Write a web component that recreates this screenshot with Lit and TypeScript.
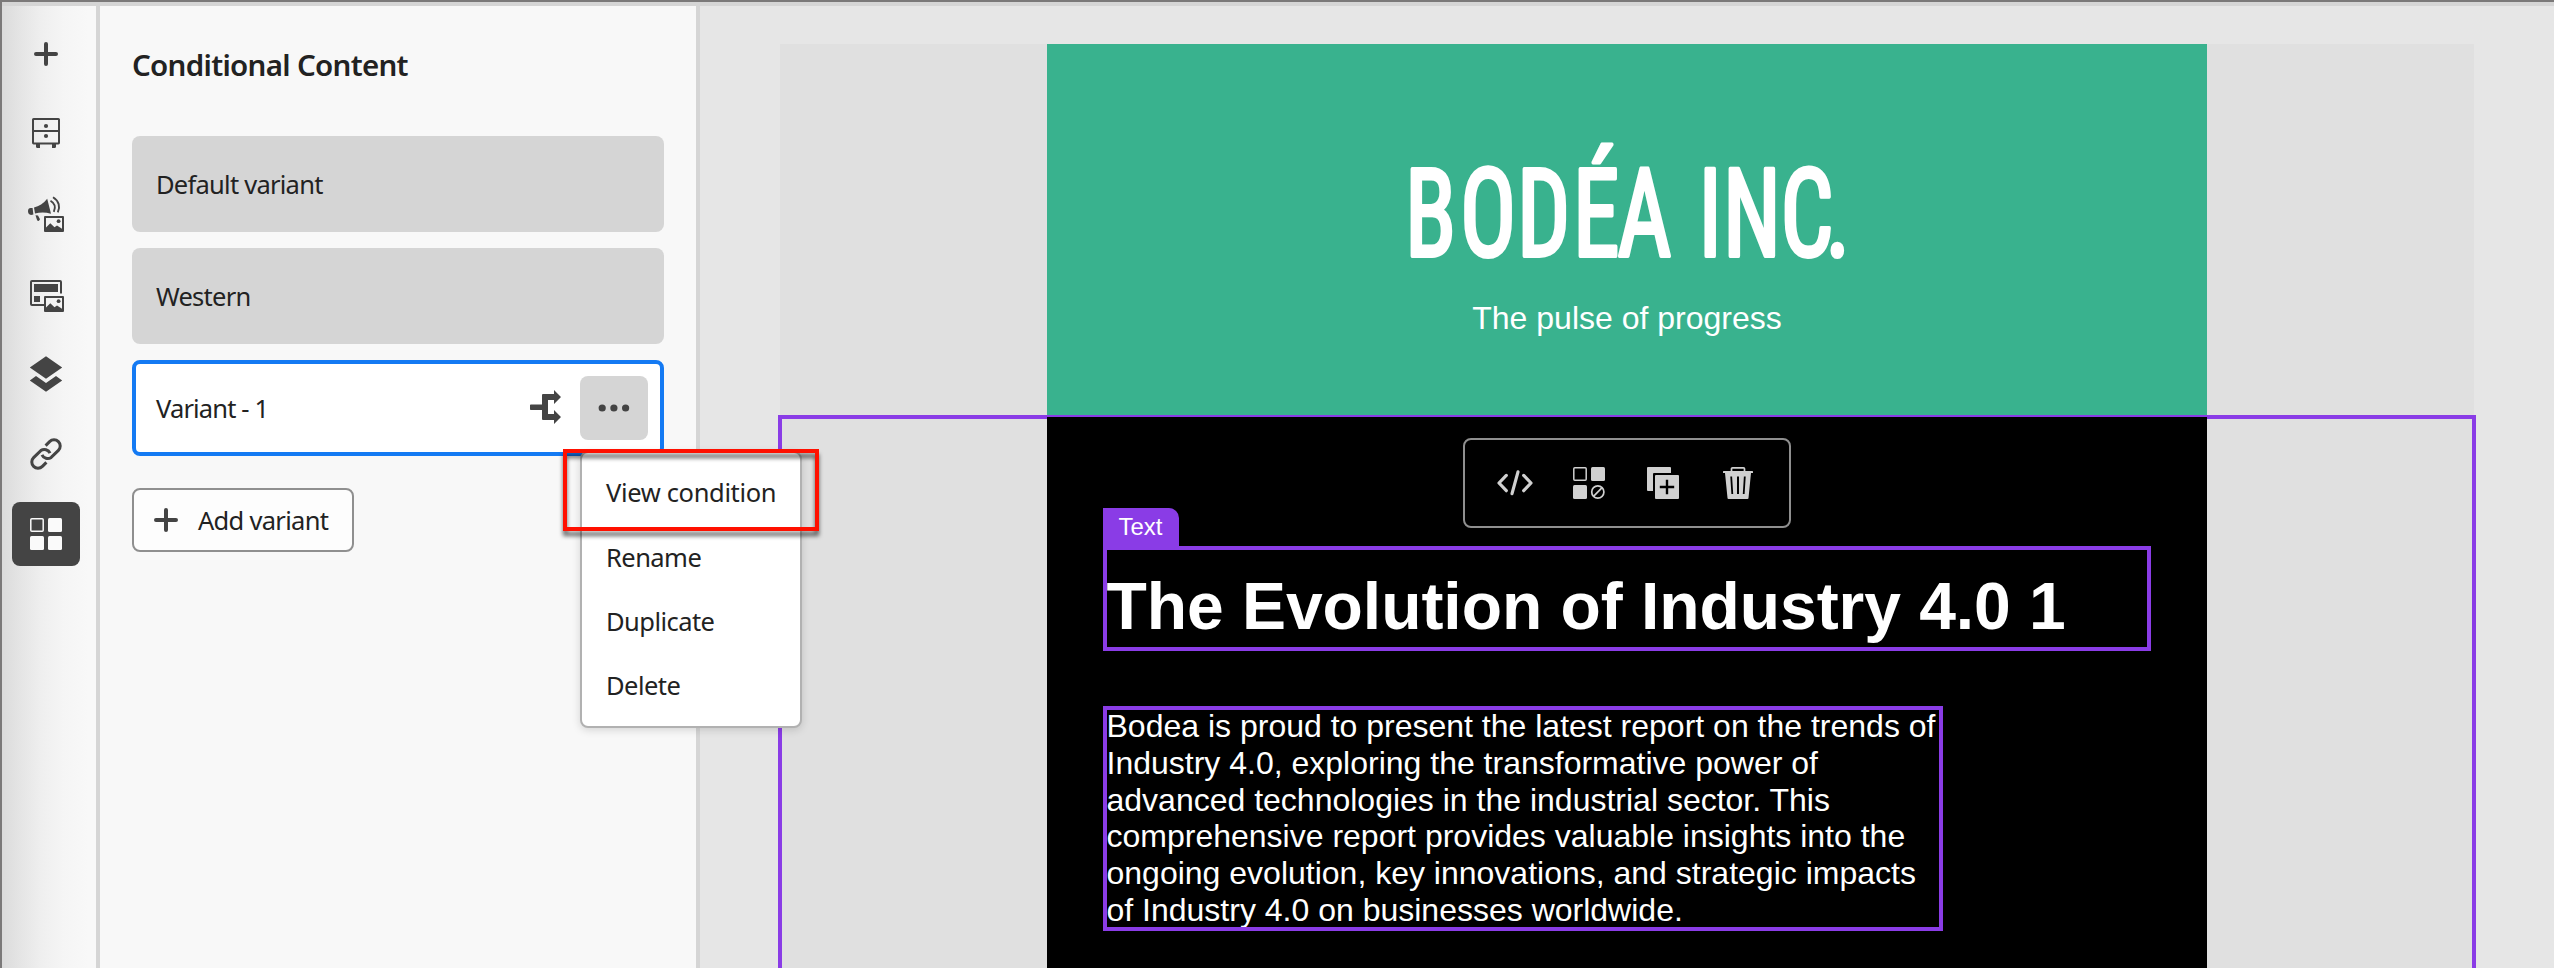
import { LitElement, html, svg, css, TemplateResult } from "lit";
import { customElement, property } from "lit/decorators.js";
import { classMap } from "lit/directives/class-map.js";

const picture = svg`
  <path fill-rule="evenodd" d="M17 20H35A1 1 0 0 1 36 21V35A1 1 0 0 1 35 36H17A1 1 0 0 1 16 35V21A1 1 0 0 1 17 20ZM18 22V31.5L22.3 27.2L26.5 31.3L29 29.6L34 32.8V22Z"/>
  <circle cx="30.6" cy="25.2" r="1.9"/>`;

const icons: Record<string, TemplateResult> = {
  plus: svg`<path d="M18 8V28M8 18H28" fill="none" stroke="currentColor" stroke-width="4" stroke-linecap="round"/>`,
  cabinet: svg`
    <rect x="5" y="3" width="26" height="24.4" rx=".6" fill="none" stroke="currentColor" stroke-width="2"/>
    <path d="M5 15H31" stroke="currentColor" stroke-width="2"/>
    <circle cx="18" cy="10" r="2.1"/><circle cx="18" cy="20" r="2.1"/>
    <path d="M8 28H12V32H8.8L8 31ZM24 28H28V31L27.2 32H24Z"/>`,
  campaign: svg`
    <path d="M6 11.6C11 10.4 15.5 7.500 19.200 2.800L23 17.800C17.500 16 12 16.200 7 17.500Z"/>
    <path d="M4.600 11.900L5.400 18.600L3 18.900C1.400 18.900 0 17.500 0 15.300C0 13.200 1.200 12.200 2.500 12.100Z"/>
    <path d="M7.500 19.300L10 19.400L12 23.300L10.800 25L9.200 24.600Z"/>
    <path d="M22.500 4.800C26.800 7.300 27.800 11.500 25.800 15.800M25 1.200C31 4.800 32.500 11 29.800 16.400" fill="none" stroke="currentColor" stroke-width="1.900"/>
    ${picture}`,
  form: svg`
    <path d="M16 29H4A1 1 0 0 1 3 28V6A1 1 0 0 1 4 5H32A1 1 0 0 1 33 6V17.500" fill="none" stroke="currentColor" stroke-width="2"/>
    <path d="M6 8H30V16H6ZM6 20H12V26H6Z"/>
    ${picture}`,
  layers: svg`<path d="M18 .3L34.200 11.500L18 22.700L1.800 11.500ZM1.800 24.500L8 20L18 27L28 20L34.200 24.500L18 35.700Z"/>`,
  link: svg`
    <g fill="none" stroke="currentColor" stroke-width="3">
      <path d="M17.600 9.600L21.600 5.600A6.200 6.200 0 0 1 30.400 14.400L23.200 21.400A6.200 6.200 0 0 1 14 18.800"/>
      <path d="M18.400 26.400L14.400 30.400A6.200 6.200 0 0 1 5.600 21.600L12.800 14.600A6.200 6.200 0 0 1 22 17.200"/>
    </g>`,
  blocks: svg`
    <rect x="2.800" y="2.800" width="12.400" height="12.400" rx="1" fill="none" stroke="currentColor" stroke-width="1.500"/>
    <rect x="20" y="2" width="14" height="14" rx="1.500"/>
    <rect x="2" y="20" width="14" height="14" rx="1.500"/>
    <rect x="20" y="20" width="14" height="14" rx="1.500"/>`,
  blocksOff: svg`
    <rect x="2.800" y="2.800" width="12.400" height="12.400" rx="1" fill="none" stroke="currentColor" stroke-width="1.500"/>
    <rect x="20" y="2" width="14" height="14" rx="1.500"/>
    <rect x="2" y="20" width="14" height="14" rx="1.500"/>
    <g fill="none" stroke="currentColor" stroke-width="1.700"><circle cx="26.800" cy="27" r="6.100"/><path d="M22.500 31.300L31.100 22.700"/></g>`,
  split: svg`<path d="M2.800 15.500H14V6A1 1 0 0 1 15 5H26V1L33 8L26 15V11H20V25H26V21L33 28L26 35V31H15A1 1 0 0 1 14 30V21H2.800A.8 .8 0 0 1 2 20.200V16.300A.8 .8 0 0 1 2.800 15.500Z"/>`,
  more: svg`<circle cx="6.200" cy="18" r="3.600"/><circle cx="17.900" cy="18" r="3.600"/><circle cx="29.600" cy="18" r="3.600"/>`,
  code: svg`
    <g fill="none" stroke="currentColor" stroke-width="3.200" stroke-linecap="round" stroke-linejoin="round">
      <path d="M9.300 10.400L2 18L9.300 25.700M26.700 10.400L34 18L26.700 25.700"/><path d="M21 6.800L15 28.600"/>
    </g>`,
  copy: svg`
    <path d="M3 2H25A1 1 0 0 1 26 3V8H9A1 1 0 0 0 8 9V26H3A1 1 0 0 1 2 25V3A1 1 0 0 1 3 2Z"/>
    <path fill-rule="evenodd" d="M11 10H33A1 1 0 0 1 34 11V33A1 1 0 0 1 33 34H11A1 1 0 0 1 10 33V11A1 1 0 0 1 11 10ZM20.800 14.800V20.800H14.800V23.200H20.800V29.200H23.200V23.200H29.200V20.800H23.200V14.800Z"/>`,
  trash: svg`
    <path d="M11.500 6V3.800A1 1 0 0 1 12.500 2.800H23.500A1 1 0 0 1 24.500 3.800V6" fill="none" stroke="currentColor" stroke-width="1.700"/>
    <path d="M3.500 6H32.500A.5 .5 0 0 1 33 6.500V8H3V6.500A.5 .5 0 0 1 3.500 6Z"/>
    <path fill-rule="evenodd" d="M5 8H31L28.500 33A1 1 0 0 1 27.500 34H8.500A1 1 0 0 1 7.500 33ZM10.300 11.500L11.400 29H13.200L12.100 11.500ZM17 11.500V29H19V11.500ZM23.900 11.500L22.800 29H24.600L25.700 11.500Z"/>`,
};

@customElement("ui-icon")
export class UiIcon extends LitElement {
  static styles = css`
    :host { display: block; width: 36px; height: 36px; }
    svg { display: block; }
  `;
  @property() name = "";
  render() {
    return html`<svg width="36" height="36" viewBox="0 0 36 36" fill="currentColor">${icons[this.name]}</svg>`;
  }
}

@customElement("nav-rail")
export class NavRail extends LitElement {
  static styles = css`
    :host {
      display: flex; flex-direction: column; align-items: center; gap: 16px;
      box-sizing: border-box; padding: 16px 6px 0 0; color: #444;
      border-right: 4px solid #d5d5d5;
      background: linear-gradient(90deg, #dbdbdb 0, #e5e5e5 20%, #efefef 42%, #f5f5f5 65%, #f8f8f8 92%);
    }
    .item { width: 68px; height: 64px; border-radius: 8px; display: grid; place-items: center; }
    .active { background: #444; color: #fafafa; }
  `;
  render() {
    const names = ["plus", "cabinet", "campaign", "form", "layers", "link", "blocks"];
    return names.map((n) => html`
      <div class=${classMap({ item: true, active: n === "blocks" })}><ui-icon name=${n}></ui-icon></div>`);
  }
}

@customElement("variant-panel")
export class VariantPanel extends LitElement {
  static styles = css`
    :host {
      display: flex; flex-direction: column; box-sizing: border-box; padding: 0 32px;
      background: #f8f8f8; border-right: 4px solid #d5d5d5; color: #222;
      font: 25.5px/36px "Noto Sans", "Open Sans", sans-serif; letter-spacing: -.75px;
    }
    h2 { margin: 39px 0 71px; font-size: 29.5px; line-height: 40px; height: 20px; font-weight: 600; letter-spacing: -.7px; }
    .list { display: flex; flex-direction: column; gap: 16px; }
    .card {
      display: flex; align-items: center; box-sizing: border-box; height: 96px;
      padding: 0 24px; border-radius: 8px; background: #d5d5d5;
    }
    .card.selected { background: #fff; border: 4px solid #147af3; padding: 0 12px 0 20px; letter-spacing: -.85px; }
    .name { flex: 1; }
    .split { color: #444; margin-right: 16px; padding-bottom: 2px; }
    .anchor { position: relative; }
    .more { width: 68px; height: 64px; border-radius: 8px; background: #d5d5d5; color: #444; display: grid; place-items: center; }
    .menu {
      position: absolute; left: 0; top: 75px; z-index: 2; width: 222px; height: 277px;
      box-sizing: border-box; padding: 7px 0 0; background: #fff; border: 2px solid #b1b1b1; border-radius: 8px;
      box-shadow: 0 2px 8px rgba(0, 0, 0, .15); letter-spacing: -.55px;
    }
    .option { height: 64.4px; display: flex; align-items: center; padding-left: 24px; }
    .option:first-child { letter-spacing: -.35px; }
    .marker {
      position: absolute; left: -17px; top: 73px; z-index: 3; box-sizing: border-box;
      width: 256px; height: 82px; border: 4px solid #ff1000; filter: drop-shadow(0 5px 2px rgba(0, 0, 0, .6));
    }
    .add {
      align-self: flex-start; margin-top: 32px; box-sizing: border-box; width: 222px; height: 64px;
      display: flex; align-items: center; gap: 14px; padding-left: 14px; letter-spacing: -.7px;
      border: 2px solid #8f8f8f; border-radius: 8px; background: #fdfdfd;
    }
    .add ui-icon { color: #444; }
  `;
  render() {
    return html`
      <h2>Conditional Content</h2>
      <div class="list">
        <div class="card">Default variant</div>
        <div class="card">Western</div>
        <div class="card selected">
          <span class="name">Variant - 1</span>
          <ui-icon class="split" name="split"></ui-icon>
          <div class="anchor">
            <div class="more"><ui-icon name="more"></ui-icon></div>
            <div class="menu">
              ${["View condition", "Rename", "Duplicate", "Delete"].map((t) => html`<div class="option">${t}</div>`)}
            </div>
            <div class="marker"></div>
          </div>
        </div>
      </div>
      <div class="add"><ui-icon name="plus"></ui-icon><span>Add variant</span></div>`;
  }
}

@customElement("email-canvas")
export class EmailCanvas extends LitElement {
  static styles = css`
    :host {
      display: flex; flex-direction: column; box-sizing: border-box; padding: 38px 80px 0; margin-bottom: -12px;
      background: #e6e6e6; color: #fff; font-family: "Liberation Sans", Arial, sans-serif;
    }
    .row { display: flex; justify-content: center; background: #e0e0e0; }
    .selected { flex: 1; outline: 4px solid #8a3ce6; outline-offset: -2px; }
    .col { width: 1160px; box-sizing: border-box; }
    header { height: 373px; background: #39b28e; display: flex; flex-direction: column; align-items: center; padding-top: 60px; box-sizing: border-box; }
    .logo { display: block; margin-left: 1px; overflow: visible; }
    .logo text {
      font: 400 123px Roboto, sans-serif; font-stretch: 75%; fill: #fff;
      stroke: #fff; stroke-width: 4px; stroke-linejoin: round;
    }
    .tagline { margin: 6px 0 0; font-size: 32px; line-height: 37px; }
    .body { position: relative; background: #000; padding: 131px 58px 0; }
    .block { outline: 4px solid #8a3ce6; outline-offset: -2px; }
    .heading { position: relative; height: 101px; width: 1044px; }
    h1 { margin: 0; padding: 20px 0 0 1.5px; font-size: 66px; line-height: 76px; white-space: nowrap; letter-spacing: -.05px; }
    .copy { box-sizing: border-box; margin: 59px 0 0; padding-left: 1.5px; width: 836px; height: 221px; font-size: 32px; line-height: 36.800px; }
    .tag {
      position: absolute; left: -2px; top: -40px; width: 76px; height: 40px; box-sizing: border-box;
      padding: 5px 0 0 15.500px; background: #8a3ce6; border-top-right-radius: 10px; font-size: 24px; line-height: 28px;
    }
    .toolbar {
      position: absolute; left: 416px; top: 21px; box-sizing: border-box; width: 328px; height: 90px;
      display: flex; align-items: center; gap: 38.200px; padding-left: 32px;
      border: 2px solid #8f8f8f; border-radius: 8px; background: #000; color: #d0d0d0;
    }
  `;
  render() {
    // Condensed wordmark: horizontal scale plus one x position per glyph.
    const k = 0.76;
    const xs = [-4, 51, 108, 164, 208.500, 289.500, 314, 371.500, 416.500].map((v) => ((v + 4) / k).toFixed(1));
    const positions = [...xs.slice(0, 5), xs[4], ...xs.slice(5)].join(" ");
    return html`
      <div class="row">
        <header class="col">
          <svg class="logo" width="446" height="190" viewBox="0 0 446 190">
            <text transform="scale(${k} 1)" y="152" x=${positions}>BODÉA INC.</text>
          </svg>
          <p class="tagline">The pulse of progress</p>
        </header>
      </div>
      <div class="row selected">
        <div class="col body">
          <div class="toolbar">
            ${["code", "blocksOff", "copy", "trash"].map((n) => html`<ui-icon name=${n}></ui-icon>`)}
          </div>
          <div class="block heading"><span class="tag">Text</span><h1>The Evolution of Industry 4.0 1</h1></div>
          <p class="block copy">Bodea is proud to present the latest report on the trends of Industry 4.0, exploring the transformative power of advanced technologies in the industrial sector. This comprehensive report provides valuable insights into the ongoing evolution, key innovations, and strategic impacts of Industry 4.0 on businesses worldwide.</p>
        </div>
      </div>`;
  }
}

@customElement("app-root")
export class AppRoot extends LitElement {
  static styles = css`
    :host {
      display: grid; grid-template-columns: 98px 600px 1fr; box-sizing: border-box;
      height: 968px; overflow: hidden; background: #d5d5d5; padding-top: 4px;
      border-top: 2px solid #7b7979; border-left: 2px solid #7b7979;
    }
    variant-panel { position: relative; z-index: 1; }
  `;
  render() {
    return html`<nav-rail></nav-rail><variant-panel></variant-panel><email-canvas></email-canvas>`;
  }
}
